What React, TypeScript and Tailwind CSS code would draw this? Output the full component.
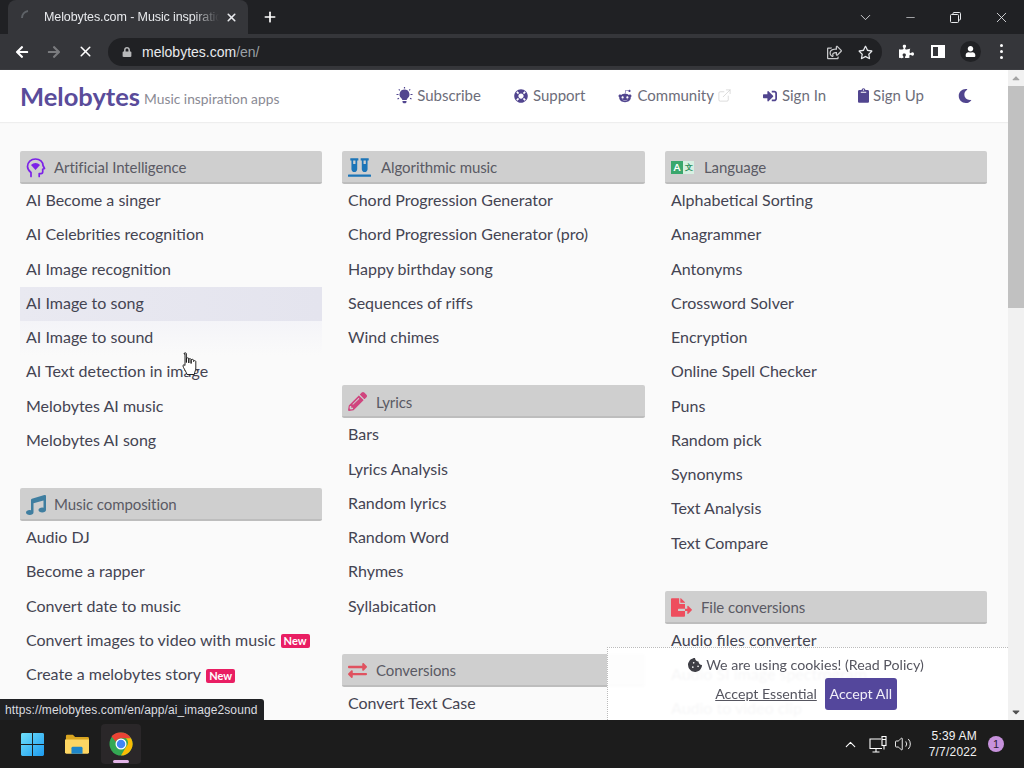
import React from "react";
import { FaLifeRing, FaRedditAlien, FaSignInAlt, FaClipboard, FaMoon, FaRegShareSquare, FaRegStar, FaPuzzlePiece, FaUser, FaVials, FaMusic, FaPencilAlt, FaExchangeAlt, FaFileExport, FaCookieBite, FaLock, FaArrowLeft, FaArrowRight, FaCaretUp, FaCaretDown } from "react-icons/fa";
import { X, Plus, ChevronDown, Minus, ExternalLink, ChevronUp, Volume2 } from "lucide-react";

const font = "font-['Lato','Liberation_Sans',sans-serif]";

function NewBadge() {
  return <span className="ml-[5px] mt-[3px] inline-block rounded-[2px] bg-[#e91e63] px-[3px] text-[11px] font-bold leading-[14px] tracking-normal text-white">New</span>;
}

function HeadIcon() {
  return (
    <svg width="20" height="20" viewBox="0 0 20 20" fill="none" stroke="#7c22e8" strokeWidth="1.7">
      <path d="M5 18.500v-4C3 13 1.500 11 1.500 8.500 1.500 4 5 1 9.500 1 14 1 17 4 17 7.500l1.500 3-1.800.7V14c0 1-.7 1.600-1.700 1.600h-1.800v2.900" strokeLinecap="round" strokeLinejoin="round" />
      <path d="M5 7c2.500-2.700 6.500-2.700 9 0l-4.500 5z" fill="#7c22e8" stroke="none" />
    </svg>
  );
}

function BulbIcon() {
  return (
    <svg width="17" height="17" viewBox="0 0 17 17" fill="#51458f" stroke="none">
      <path d="M8.500 2.500a5 5 0 0 0-3.200 8.800c.6.500.9 1 1 1.700h4.400c.1-.7.400-1.200 1-1.700A5 5 0 0 0 8.500 2.500zM6.500 14h4v1.200l-1 1h-2l-1-1z" />
      <path d="M8.500 0v1.500M2.800 2.300l1 1M14.200 2.300l-1 1M0.500 7.500h2M14.500 7.500h2M1.500 12l1.500-.8M15.500 12L14 11.200" stroke="#51458f" strokeWidth="1.200" fill="none" />
    </svg>
  );
}

function LangIcon() {
  return (
    <div className="flex h-[13px] w-[23px] text-[10px] font-bold leading-[13px] text-white">
      <span className="w-[12px] bg-[#3aa76d] text-center">A</span>
      <span className="w-[11px] bg-[#d7f0e2] text-center text-[8px] text-[#2f8f5c]">文</span>
    </div>
  );
}

type Item = { t: string; isNew?: boolean; hover?: number };

function Section({ icon, title, items, gap }: { icon: React.ReactNode; title: string; items: Item[]; gap: string }) {
  return (
    <section>
      <div className={`flex h-[33px] items-center rounded-[2px] border-b-2 border-[#bdbdbd] bg-[#cfcfcf] pl-[6px] pt-[2px] text-[15px] tracking-[-0.08px] text-[#5a5a64] ${gap}`}>
        <span className="flex shrink-0 items-center">{icon}</span>
        <span>{title}</span>
      </div>
      <ul>
        {items.map((it) => (
          <li
            key={it.t}
            className={`flex h-[34.25px] items-center whitespace-nowrap pb-[2px] pl-[6px] text-[16px] tracking-normal text-[#444452] ${it.hover === 1 ? "bg-gradient-to-r from-[#e9e9f1] to-[#e4e4ee]" : it.hover === 2 ? "bg-gradient-to-b from-[#f4f4f8] to-[#fafafa]" : ""}`}
          >
            {it.t}
            {it.isNew && <NewBadge />}
          </li>
        ))}
      </ul>
    </section>
  );
}

function WindowsLogo() {
  return (
    <svg width="23" height="23" viewBox="0 0 24 24">
      <defs>
        <linearGradient id="w" x1="0" y1="0" x2="1" y2="1">
          <stop offset="0" stopColor="#6fe0fa" />
          <stop offset="1" stopColor="#1d9bf0" />
        </linearGradient>
      </defs>
      <path d="M0 1.500A1.500 1.500 0 0 1 1.500 0H11.500V11.500H0zM12.500 0H22.500A1.500 1.500 0 0 1 24 1.500V11.500H12.500zM0 12.500H11.500V24H1.500A1.500 1.500 0 0 1 0 22.500zM12.500 12.500H24V22.500A1.500 1.500 0 0 1 22.500 24H12.500z" fill="url(#w)" />
    </svg>
  );
}

function FolderIcon() {
  return (
    <svg width="24" height="22" viewBox="0 0 26 22">
      <path d="M1 2.500A1.500 1.500 0 0 1 2.500 1h6L11 3.500h13.500A1.500 1.500 0 0 1 26 5v2H1z" fill="#d9a520" />
      <path d="M0 6h26v14a1.500 1.500 0 0 1-1.500 1.500h-23A1.500 1.500 0 0 1 0 20z" fill="#fdd663" />
      <path d="M7 21.500v-6a1.500 1.500 0 0 1 1.500-1.500h9a1.500 1.500 0 0 1 1.500 1.500v6z" fill="#1e86c9" />
    </svg>
  );
}

function ChromeLogo() {
  return (
    <svg width="24" height="24" viewBox="0 0 48 48">
      <circle cx="24" cy="24" r="23" fill="#34a853" />
      <path d="M24 1a23 23 0 0 1 20 11.500H24a11.500 11.500 0 0 0-10.500 7L5 8.500A23 23 0 0 1 24 1z" fill="#ea4335" />
      <path d="M44 12.500A23 23 0 0 1 24 47l10-17a11.500 11.500 0 0 0 0-17.500z" fill="#fbbc04" />
      <circle cx="24" cy="24" r="11" fill="#fff" />
      <circle cx="24" cy="24" r="8.500" fill="#4285f4" />
    </svg>
  );
}

function NavLink({ icon, label, cls, extra }: { icon: React.ReactNode; label: string; cls: string; extra?: React.ReactNode }) {
  return (
    <div className={`flex items-center text-[15px] text-[#6d6d7a] ${cls}`}>
      <span className="flex items-center text-[#51458f]">{icon}</span>
      <span>{label}</span>
      {extra}
    </div>
  );
}

export default function App() {
  return (
    <div className={`relative flex h-[768px] w-[1024px] flex-col overflow-hidden bg-[#1c1c1c] ${font}`}>
      {/* tab strip */}
      <div className="flex h-[34px] shrink-0 items-end bg-[#202124] pl-[8px]">
        <div className="flex h-[34px] w-[240px] items-center rounded-t-[8px] bg-[#35363a] pl-[12px] pr-[10px] font-['Liberation_Sans',sans-serif] text-[12.500px] tracking-[-0.1px] text-[#e8eaed]">
          <svg width="16" height="16" viewBox="0 0 16 16" fill="none" stroke="#5f6368" strokeWidth="2" className="shrink-0"><path d="M2 9a7 7 0 0 1 6-7" /></svg>
          <span className="ml-[8px] w-[175px] overflow-hidden whitespace-nowrap [mask-image:linear-gradient(to_right,black_85%,transparent)]">Melobytes.com - Music inspiration apps</span>
          <X size={13} strokeWidth={3} className="ml-auto text-[#e8eaed]" />
        </div>
        <div className="ml-[14px] flex h-[34px] items-center text-white"><Plus size={16} strokeWidth={2.5} /></div>
        <div className="ml-auto flex h-[34px] items-center text-[#e8eaed]">
          <ChevronDown size={17} strokeWidth={1.2} className="mr-[30px]" />
          <Minus size={13} strokeWidth={1.2} className="mr-[33px]" />
          <svg width="11" height="11" viewBox="0 0 11 11" fill="none" stroke="currentColor" className="mr-[32px]"><rect x="0.500" y="2.500" width="8" height="8" rx="1" /><path d="M3 2.500V1.500a1 1 0 0 1 1-1h5.500a1 1 0 0 1 1 1V7a1 1 0 0 1-1 1H8.500" /></svg>
          <X size={17} strokeWidth={1.2} className="mr-[14px]" />
        </div>
      </div>
      {/* toolbar */}
      <div className="flex h-[36px] shrink-0 items-center border-b border-[#3c3d41] bg-[#35363a] pl-[15px] text-white">
        <FaArrowLeft size={14} />
        <FaArrowRight size={14} className="ml-[18px] text-[#7a7b7e]" />
        <X size={17} strokeWidth={2.2} className="ml-[16px]" />
        <div className="ml-[14px] flex h-[28px] w-[774px] items-center rounded-full bg-[#202124] pl-[14px] pr-[9px] pt-[1px] font-['Liberation_Sans',sans-serif] text-[14px]">
          <FaLock size={10} className="text-[#b7b8ba]" />
          <span className="ml-[10px] text-[#e8eaed]">melobytes.com</span>
          <span className="text-[#9aa0a6]">/en/</span>
          <FaRegShareSquare size={15} className="ml-auto mr-[16px] text-[#c8c9cb]" />
          <FaRegStar size={15} className="text-[#e8eaed]" />
        </div>
        <FaPuzzlePiece size={15} className="ml-[17px]" />
        <div className="ml-[17px] h-[13px] w-[14px] border-2 border-white bg-[linear-gradient(to_right,#35363a_50%,white_50%)]" />
        <div className="ml-[15px] flex h-[21px] w-[21px] items-center justify-center rounded-full bg-[#202124]"><FaUser size={11} /></div>
        <div className="ml-[19px] flex flex-col gap-[3px]">
          <span className="h-[3px] w-[3px] rounded-full bg-white" />
          <span className="h-[3px] w-[3px] rounded-full bg-white" />
          <span className="h-[3px] w-[3px] rounded-full bg-white" />
        </div>
      </div>
      {/* viewport */}
      <div className="flex h-[650px] shrink-0 overflow-hidden bg-[#fafafa]">
        <div className="w-[1008px] shrink-0">
          <header className="flex h-[52px] items-center bg-white pl-[20px] shadow-[0_1px_1px_#eeeeee]">
            <span className="text-[25.500px] font-bold text-[#5a4c9a]">Melobytes</span>
            <span className="ml-[4px] mt-[7px] text-[13.800px] text-[#8a8a94]">Music inspiration apps</span>
            <nav className="ml-auto flex items-center pb-[1px] pr-[36px]">
              <NavLink icon={<BulbIcon />} label="Subscribe" cls="gap-[4px]" />
              <NavLink icon={<FaLifeRing size={14} />} label="Support" cls="gap-[5px] ml-[33px]" />
              <NavLink icon={<FaRedditAlien size={14} />} label="Community" cls="gap-[5px] ml-[33px]" extra={<ExternalLink size={15} strokeWidth={1} className="-ml-[2px] text-[#c8c8c8]" />} />
              <NavLink icon={<FaSignInAlt size={14} />} label="Sign In" cls="gap-[5px] ml-[31px]" />
              <NavLink icon={<FaClipboard size={15} className="w-[11px]" />} label="Sign Up" cls="gap-[4px] ml-[32px]" />
              <FaMoon size={14} className="ml-[34px] text-[#51458f]" />
            </nav>
          </header>
          <div className="flex gap-[20px] pl-[20px] pt-[29px]">
            <div className="flex w-[302px] shrink-0 flex-col gap-[30px]">
              <Section gap="gap-[8px]" icon={<HeadIcon />} title="Artificial Intelligence" items={[{ t: "AI Become a singer" }, { t: "AI Celebrities recognition" }, { t: "AI Image recognition" }, { t: "AI Image to song", hover: 1 }, { t: "AI Image to sound", hover: 2 }, { t: "AI Text detection in image" }, { t: "Melobytes AI music" }, { t: "Melobytes AI song" }]} />
              <Section gap="gap-[8px]" icon={<FaMusic size={20} className="text-[#3f7ea0]" />} title="Music composition" items={[{ t: "Audio DJ" }, { t: "Become a rapper" }, { t: "Convert date to music" }, { t: "Convert images to video with music", isNew: true }, { t: "Create a melobytes story", isNew: true }, { t: "Create music" }]} />
            </div>
            <div className="flex w-[303px] shrink-0 flex-col gap-[30px]">
              <Section gap="gap-[10px]" icon={<FaVials size={23} className="text-[#1c75b8]" />} title="Algorithmic music" items={[{ t: "Chord Progression Generator" }, { t: "Chord Progression Generator (pro)" }, { t: "Happy birthday song" }, { t: "Sequences of riffs" }, { t: "Wind chimes" }]} />
              <Section gap="gap-[9px]" icon={<FaPencilAlt size={19} className="text-[#d0457e]" />} title="Lyrics" items={[{ t: "Bars" }, { t: "Lyrics Analysis" }, { t: "Random lyrics" }, { t: "Random Word" }, { t: "Rhymes" }, { t: "Syllabication" }]} />
              <Section gap="gap-[9px]" icon={<FaExchangeAlt size={19} className="text-[#e0525f]" />} title="Conversions" items={[{ t: "Convert Text Case" }, { t: "Convert to text" }]} />
            </div>
            <div className="flex w-[322px] shrink-0 flex-col gap-[30px]">
              <Section gap="gap-[10px]" icon={<LangIcon />} title="Language" items={[{ t: "Alphabetical Sorting" }, { t: "Anagrammer" }, { t: "Antonyms" }, { t: "Crossword Solver" }, { t: "Encryption" }, { t: "Online Spell Checker" }, { t: "Puns" }, { t: "Random pick" }, { t: "Synonyms" }, { t: "Text Analysis" }, { t: "Text Compare" }]} />
              <Section gap="gap-[9px]" icon={<FaFileExport size={21} className="text-[#ee4e5e]" />} title="File conversions" items={[{ t: "Audio files converter" }, { t: "Audio SI image spectrogram" }, { t: "Audio to video clip" }]} />
            </div>
          </div>
        </div>
        {/* scrollbar */}
        <div className="flex w-[16px] shrink-0 flex-col items-center bg-[#f1f1f1] text-[#505050]">
          <FaCaretUp size={12} className="mt-[2px] text-[#a3a3a3]" />
          <div className="mt-[2px] h-[222px] w-[16px] bg-[#c1c1c1]" />
          <FaCaretDown size={12} className="mt-auto mb-[2px]" />
        </div>
      </div>
      {/* taskbar */}
      <footer className="flex h-[48px] shrink-0 items-center bg-[#1c1c1c] font-['Liberation_Sans',sans-serif] text-white">
        <div className="ml-[21px] flex"><WindowsLogo /></div>
        <div className="ml-[21px] flex"><FolderIcon /></div>
        <div className="relative ml-[12px] flex h-[40px] w-[40px] items-center justify-center rounded-[4px] bg-[#2a2729]">
          <ChromeLogo />
          <span className="absolute bottom-[1px] h-[3px] w-[16px] rounded-full bg-[#e3b5e8]" />
        </div>
        <ChevronUp size={17} strokeWidth={1.5} className="ml-auto" />
        <svg width="18" height="17" viewBox="0 0 18 17" fill="none" stroke="#fff" strokeWidth="1.1" className="ml-[10px]">
          <path d="M12 3H1v9.500h12M7 12.500V16M3.500 16h7" />
          <rect x="13" y="0.500" width="4" height="9" />
          <path d="M13 3.500h4M15 9.500v4" />
        </svg>
        <Volume2 size={18} strokeWidth={1.2} className="ml-[7px]" />
        <div className="ml-[17px] flex flex-col items-end text-[12px] leading-[16px] tracking-[0.2px] text-[#f2f2f2]">
          <span>5:39 AM</span>
          <span>7/7/2022</span>
        </div>
        <div className="ml-[11px] mr-[20px] flex h-[16px] w-[16px] items-center justify-center rounded-full bg-[#c792dc] text-[11px] text-[#2a1a30]">1</div>
      </footer>
      {/* status url */}
      <div className="absolute bottom-[48px] left-0 flex h-[21px] w-[264px] items-center rounded-tr-[3px] bg-[#202124] pl-[5px] font-['Liberation_Sans',sans-serif] text-[12px] tracking-[0.1px] text-[#dcdde0]">
        https://melobytes.com/en/app/ai_image2sound
      </div>
      {/* cookies */}
      <div className="absolute left-[607px] top-[647px] flex h-[73px] w-[401px] flex-col items-center border-l border-t border-dotted border-[#bbbbbb] bg-white/95 pt-[7px] text-[14.200px] leading-[20px] text-[#55555f] backdrop-blur-[1px]">
        <div className="flex items-center gap-[4px] pr-[4px]">
          <FaCookieBite size={14} className="text-[#3f3f46]" />
          <span>We are using cookies! (Read Policy)</span>
        </div>
        <div className="mt-[3px] flex items-center gap-[8px] pr-[4px]">
          <span className="underline">Accept Essential</span>
          <span className="flex h-[32px] w-[72px] items-center justify-center rounded-[3px] bg-[#54479c] text-[#f0eef8]">Accept All</span>
        </div>
      </div>
      {/* cursor */}
      <svg width="15" height="24" viewBox="0 0 15 23" className="pointer-events-none absolute left-[182px] top-[352px]">
        <path d="M2 1.500a1.200 1.200 0 0 1 2.400 0V10V6.500a1.200 1.200 0 0 1 2.400 0V10.500V7a1.200 1.200 0 0 1 2.300 0V11V8a1.200 1.200 0 0 1 2.400 0V9a1.200 1.200 0 0 1 2.300 0v6.500c0 2.500-1 3-1.500 6.500H5c-.5-2.500-4-7-4-8.500 0-1.500 1-1.500 2-.5V1.500z" fill="#fff" stroke="#111" strokeWidth="0.9" />
      </svg>
    </div>
  );
}
